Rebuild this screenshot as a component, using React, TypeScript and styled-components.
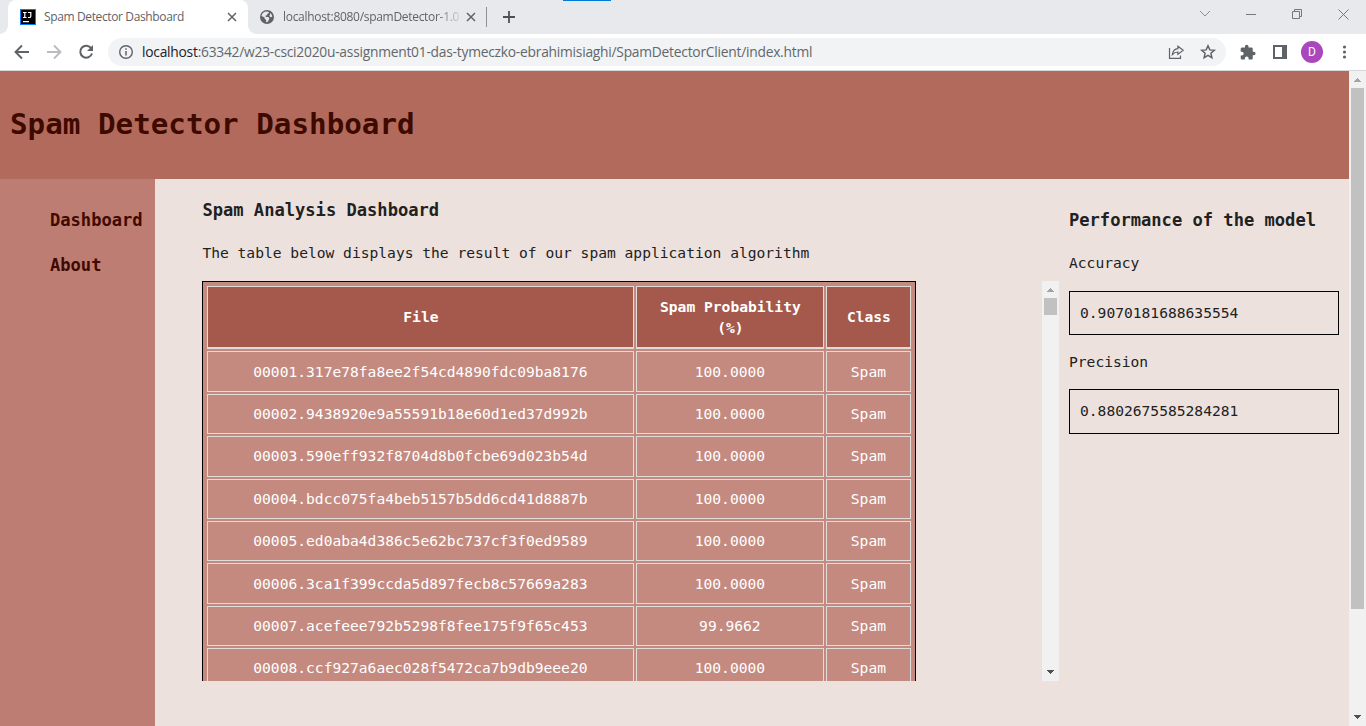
import React from "react";
import styled, { createGlobalStyle } from "styled-components";

const GlobalStyle = createGlobalStyle`
  *, *::before, *::after { box-sizing: border-box; }
  html, body { margin: 0; padding: 0; overflow: hidden; }
  body { background: #ede1dd; }
`;

const mono = `"DejaVu Sans Mono", "Liberation Mono", monospace`;
const ui = `"Open Sans", "Noto Sans", sans-serif`;

const Window = styled.div`
  width: 1366px;
  height: 726px;
  display: flex;
  flex-direction: column;
  overflow: hidden;
  font-family: ${ui};
`;

const TabStrip = styled.div`
  position: relative;
  flex: 0 0 34px;
  display: flex;
  background: #e8e9ed;
  padding-left: 8px;
`;

const LoadingMark = styled.div`
  position: absolute;
  left: 563px;
  top: 0;
  width: 48px;
  height: 1px;
  background: #0078d7;
`;

const Tab = styled.div<{ $active?: boolean; $width: number }>`
  position: relative;
  width: ${(p) => p.$width}px;
  height: 34px;
  display: flex;
  align-items: center;
  padding-left: 12px;
  border-radius: 8px 8px 0 0;
  background: ${(p) => (p.$active ? "#fff" : "transparent")};
  &::before, &::after {
    content: "";
    display: ${(p) => (p.$active ? "block" : "none")};
    position: absolute;
    bottom: 0;
    width: 8px;
    height: 8px;
  }
  &::before { left: -8px; background: radial-gradient(circle at 0 0, transparent 7.5px, #fff 8px); }
  &::after { right: -8px; background: radial-gradient(circle at 100% 0, transparent 7.5px, #fff 8px); }
`;

const TabTitle = styled.span<{ $fade?: boolean; $width: number; $spacing: number }>`
  width: ${(p) => p.$width}px;
  margin: 0 5px 0 8px;
  white-space: nowrap;
  font-size: 12px;
  line-height: 18px;
  letter-spacing: ${(p) => p.$spacing}px;
  color: #5f6368;
  ${(p) => p.$fade && "mask-image: linear-gradient(90deg, #000 86%, rgba(0, 0, 0, 0.2) 99%);"}
`;

const TabDivider = styled.div`
  width: 1px;
  height: 20px;
  margin: 7px 0 0 0;
  background: #8d9095;
`;

const NewTab = styled.div`
  width: 44px;
  height: 34px;
  display: flex;
  align-items: center;
  justify-content: center;
`;

const WindowControls = styled.div`
  margin-left: auto;
  display: flex;
  width: 184px;
  height: 28px;
`;

const ControlButton = styled.div`
  width: 46px;
  display: flex;
  align-items: center;
  justify-content: center;
`;

const Toolbar = styled.div`
  flex: 0 0 37px;
  display: flex;
  align-items: center;
  padding: 0 13px;
  background: #fff;
  border-bottom: 1px solid #d5d7da;
`;

const NavIcons = styled.div`
  display: flex;
  gap: 14px;
  width: 95px;
`;

const AddressBar = styled.div`
  width: 1118px;
  height: 28px;
  border-radius: 14px;
  background: #f1f3f4;
  display: flex;
  align-items: center;
  padding: 0 9px;
`;

const Url = styled.span`
  margin-left: 7px;
  flex: 1;
  white-space: nowrap;
  font-size: 13.8px;
  line-height: 20px;
  letter-spacing: -0.24px;
  color: #63676c;
  b { font-weight: 400; color: #202124; }
`;

const AddressActions = styled.div`
  display: flex;
  gap: 14px;
`;

const Extras = styled.div`
  display: flex;
  align-items: center;
  margin-left: 13px;
`;

const Avatar = styled.div`
  width: 22px;
  height: 22px;
  margin: 0 13px 0 13px;
  border-radius: 50%;
  background: #ab47bc;
  color: #fff;
  font: 400 12px/22px Roboto, sans-serif;
  text-align: center;
`;

const Viewport = styled.div`
  flex: 1;
  display: flex;
  min-height: 0;
`;

const Page = styled.div`
  width: 1349px;
  display: flex;
  flex-direction: column;
  background: #ede1dd;
  font-family: ${mono};
  color: #212121;
`;

const Header = styled.header`
  flex: 0 0 108px;
  padding: 34px 10px;
  background: #b26a5d;
`;

const Title = styled.h1`
  margin: 0;
  font-size: 29.23px;
  line-height: 38px;
  color: #3e0a00;
  white-space: nowrap;
`;

const Columns = styled.div`
  flex: 1;
  display: flex;
  min-height: 0;
`;

const SideNav = styled.nav`
  width: 155px;
  padding: 30px 0 0 50px;
  background: #be7d72;
`;

const NavLink = styled.a`
  display: block;
  margin-bottom: 23px;
  font-size: 17.1px;
  font-weight: 700;
  line-height: 22px;
  color: #3e0a00;
`;

const Main = styled.main`
  width: 904px;
  padding: 20px 0 0 47.4px;
`;

const Heading = styled.h3`
  margin: 0 0 22px;
  font-size: 17.1px;
  line-height: 22px;
  white-space: nowrap;
`;

const Text = styled.p`
  margin: 0;
  font-size: 14.62px;
  line-height: 20px;
  white-space: nowrap;
`;

const TableScroller = styled.div`
  display: flex;
  justify-content: space-between;
  width: 856.6px;
  height: 400px;
  margin-top: 18px;
  overflow: hidden;
`;

const Table = styled.table`
  width: 713.6px;
  height: max-content;
  table-layout: fixed;
  border: 1px solid #000;
  border-spacing: 2px;
  padding: 2px;
  background: #c48a80;
  color: #fff;
  font-size: 14.62px;
  line-height: 21px;
  text-align: center;
`;

const HeadCell = styled.th<{ $width: number }>`
  width: ${(p) => p.$width}px;
  height: 63.4px;
  padding: 0 10px 1px;
  border: 1px solid #e0dcda;
  border-bottom-width: 2px;
  background: #a5594c;
`;

const Cell = styled.td`
  height: 40.4px;
  padding: 0 1px 1px 0;
  border: 1px solid #e0dcda;
`;

const Aside = styled.aside`
  width: 280px;
  padding: 30px 0 0 10px;
`;

const Metric = styled.div`
  width: 270px;
  height: 44.4px;
  margin: 17.6px 0 16.6px;
  padding: 10.3px 10px;
  border: 1px solid #000;
  font-size: 14.62px;
  line-height: 21px;
`;

const ScrollTrack = styled.div`
  width: 17px;
  height: 100%;
  display: flex;
  flex-direction: column;
  align-items: center;
  background: #f1f1f1;
`;

const ScrollThumb = styled.div<{ $height: number }>`
  width: 13px;
  height: ${(p) => p.$height}px;
  background: #c1c1c1;
`;

const ScrollButton = styled.div<{ $end?: boolean }>`
  width: 17px;
  height: 17px;
  margin-top: ${(p) => (p.$end ? "auto" : 0)};
`;

const Svg = styled.svg`
  display: block;
  flex: none;
`;

const ArrowUp = () => (
  <Svg width="17" height="17" fill="#a3a3a3" shapeRendering="crispEdges">
    <path d="M8 7h1v1H8zM7 8h3v1H7zM6 9h5v1H6zM5 10h7v1H5z" />
  </Svg>
);
const ArrowDown = () => (
  <Svg width="17" height="17" fill="#505050" shapeRendering="crispEdges">
    <path d="M5 6h7v1H5zM6 7h5v1H6zM7 8h3v1H7zM8 9h1v1H8z" />
  </Svg>
);

const Scrollbar = ({ thumb }: { thumb: number }) => (
  <ScrollTrack>
    <ScrollButton><ArrowUp /></ScrollButton>
    <ScrollThumb $height={thumb} />
    <ScrollButton $end><ArrowDown /></ScrollButton>
  </ScrollTrack>
);

const CloseTab = () => (
  <Svg width="10" height="10" stroke="#5f6368" strokeWidth="1.5" fill="none">
    <path d="M1 1l8 8M9 1l-8 8" />
  </Svg>
);

const rows: [string, string][] = [
  ["00001.317e78fa8ee2f54cd4890fdc09ba8176", "100.0000"],
  ["00002.9438920e9a55591b18e60d1ed37d992b", "100.0000"],
  ["00003.590eff932f8704d8b0fcbe69d023b54d", "100.0000"],
  ["00004.bdcc075fa4beb5157b5dd6cd41d8887b", "100.0000"],
  ["00005.ed0aba4d386c5e62bc737cf3f0ed9589", "100.0000"],
  ["00006.3ca1f399ccda5d897fecb8c57669a283", "100.0000"],
  ["00007.acefeee792b5298f8fee175f9f65c453", "99.9662"],
  ["00008.ccf927a6aec028f5472ca7b9db9eee20", "100.0000"],
];

export default function App() {
  return (
    <Window>
      <GlobalStyle />
      <TabStrip>
        <LoadingMark />
        <Tab $active $width={240}>
          <Svg width="16" height="16">
            <rect x=".5" y=".5" width="15" height="15" fill="#000" stroke="#087cfa" />
            <path d="M3 3.5h3.6M3 8.5h3.6M4.8 3.5v5M8 3.5h2.8v3.7q0 1.3-1.4 1.3H8M3 12.7h6" fill="none" stroke="#fff" strokeWidth="1.2" />
          </Svg>
          <TabTitle $width={178} $spacing={-0.37}>Spam Detector Dashboard</TabTitle>
          <CloseTab />
        </Tab>
        <Tab $width={238}>
          <Svg width="15" height="14" viewBox="0 0 15 14">
            <circle cx="7" cy="7" r="7" fill="#5f6368" />
            <path d="M7.3 1.4 9 2.2 8.4 3.6 7 4 7.2 5.2 5.5 5.5 5.8 7h2.5l1 1.3-.5 1.6-1.5 2.4-1.3-.2.2-2-1.6-1.3.1-1.4L1.5 6A5.6 5.6 0 0 1 7.3 1.4M10.2 3l1.4 1.5.7 2.3-1.7.5-1.2-1.2L10 4.6z" fill="#e8e9ed" />
          </Svg>
          <TabTitle $fade $width={178} $spacing={-0.3}>localhost:8080/spamDetector-1.0</TabTitle>
          <CloseTab />
        </Tab>
        <TabDivider />
        <NewTab>
          <Svg width="12" height="12" stroke="#4d5156" strokeWidth="1.8"><path d="M0 6h12M6 0v12" /></Svg>
        </NewTab>
        <WindowControls>
          <ControlButton><Svg width="12" height="8" fill="none" stroke="#8c8d91"><path d="M1 1l5 5 5-5" /></Svg></ControlButton>
          <ControlButton><Svg width="10" height="1" fill="#77787c"><path d="M0 0h10v1H0z" /></Svg></ControlButton>
          <ControlButton><Svg width="10" height="10" fill="none" stroke="#77787c"><path d="M.5 2.5h7v7h-7zM2.5 2.5V.5h7v7h-2" /></Svg></ControlButton>
          <ControlButton><Svg width="11" height="11" fill="none" stroke="#77787c"><path d="M.5 .5l10 10M10.5 .5l-10 10" /></Svg></ControlButton>
        </WindowControls>
      </TabStrip>
      <Toolbar>
        <NavIcons>
          <Svg width="18" height="18" fill="none" stroke="#5f6368" strokeWidth="1.9"><path d="M16 9H3M9 2.5 2.5 9 9 15.5" /></Svg>
          <Svg width="18" height="18" fill="none" stroke="#b9bbbe" strokeWidth="1.9"><path d="M2 9h13M9 2.5 15.5 9 9 15.5" /></Svg>
          <Svg width="18" height="18"><path d="M14.3 5.4A6 6 0 1 0 15 10.5" fill="none" stroke="#5f6368" strokeWidth="2" /><path d="M16 2v6h-6z" fill="#5f6368" /></Svg>
        </NavIcons>
        <AddressBar>
          <Svg width="18" height="18" fill="none" stroke="#5f6368" strokeWidth="1.4"><circle cx="9" cy="9" r="6.3" /><path d="M9 8v4.5M9 5.3v1.5" strokeWidth="1.5" /></Svg>
          <Url><b>localhost</b>:63342/w23-csci2020u-assignment01-das-tymeczko-ebrahimisiaghi/SpamDetectorClient/index.html</Url>
          <AddressActions>
            <Svg width="18" height="18" fill="none" stroke="#5f6368" strokeWidth="1.2"><path d="M2.5 5v10.4h11v-2.9M5.4 11.5c.5-3.8 2.5-5.6 5.5-5.8V3.2l5.3 4.1-5.3 4.1V9c-2.5 0-4 .8-5.5 2.5z" /></Svg>
            <Svg width="18" height="18" fill="none" stroke="#5f6368" strokeWidth="1.5"><path d="M9 2.8l1.8 4.1 4.5.4-3.4 3 1 4.4L9 12.4l-3.9 2.3 1-4.4-3.4-3 4.5-.4z" /></Svg>
          </AddressActions>
        </AddressBar>
        <Extras>
          <Svg width="19" height="17" viewBox="0 0 26 24" fill="#5f6368"><path d="M20.5 11H19V7c0-1.100-.9-2-2-2h-4V3.500a2.500 2.500 0 0 0-5 0V5H4c-1.100 0-2 .9-2 2v3.800h1.500a2.700 2.700 0 0 1 0 5.400H2V20c0 1.100.9 2 2 2h3.800v-1.500a2.700 2.700 0 0 1 5.400 0V22H17c1.100 0 2-.9 2-2v-4h1.500a2.500 2.500 0 0 0 0-5z" /></Svg>
          <Svg width="30" height="14"><path d="M16 1h12v12H16z" fill="#fff" stroke="#5f6368" strokeWidth="2" /><path d="M24 0h5v14h-5z" fill="#5f6368" /></Svg>
          <Avatar>D</Avatar>
          <Svg width="16" height="16" fill="#5f6368"><circle cx="8.5" cy="3" r="1.6" /><circle cx="8.5" cy="8" r="1.6" /><circle cx="8.5" cy="13" r="1.6" /></Svg>
        </Extras>
      </Toolbar>
      <Viewport>
        <Page>
          <Header><Title>Spam Detector Dashboard</Title></Header>
          <Columns>
            <SideNav>
              <NavLink>Dashboard</NavLink>
              <NavLink>About</NavLink>
            </SideNav>
            <Main>
              <Heading>Spam Analysis Dashboard</Heading>
              <Text>The table below displays the result of our spam application algorithm</Text>
              <TableScroller>
                <Table>
                  <thead>
                    <tr>
                      <HeadCell $width={427}>File</HeadCell>
                      <HeadCell $width={188}>Spam Probability (%)</HeadCell>
                      <HeadCell $width={85}>Class</HeadCell>
                    </tr>
                  </thead>
                  <tbody>
                    {rows.map(([file, probability]) => (
                      <tr key={file}>
                        <Cell>{file}</Cell>
                        <Cell>{probability}</Cell>
                        <Cell>Spam</Cell>
                      </tr>
                    ))}
                  </tbody>
                </Table>
                <Scrollbar thumb={17} />
              </TableScroller>
            </Main>
            <Aside>
              <Heading>Performance of the model</Heading>
              <Text>Accuracy</Text>
              <Metric>0.9070181688635554</Metric>
              <Text>Precision</Text>
              <Metric>0.8802675585284281</Metric>
            </Aside>
          </Columns>
        </Page>
        <Scrollbar thumb={521} />
      </Viewport>
    </Window>
  );
}
